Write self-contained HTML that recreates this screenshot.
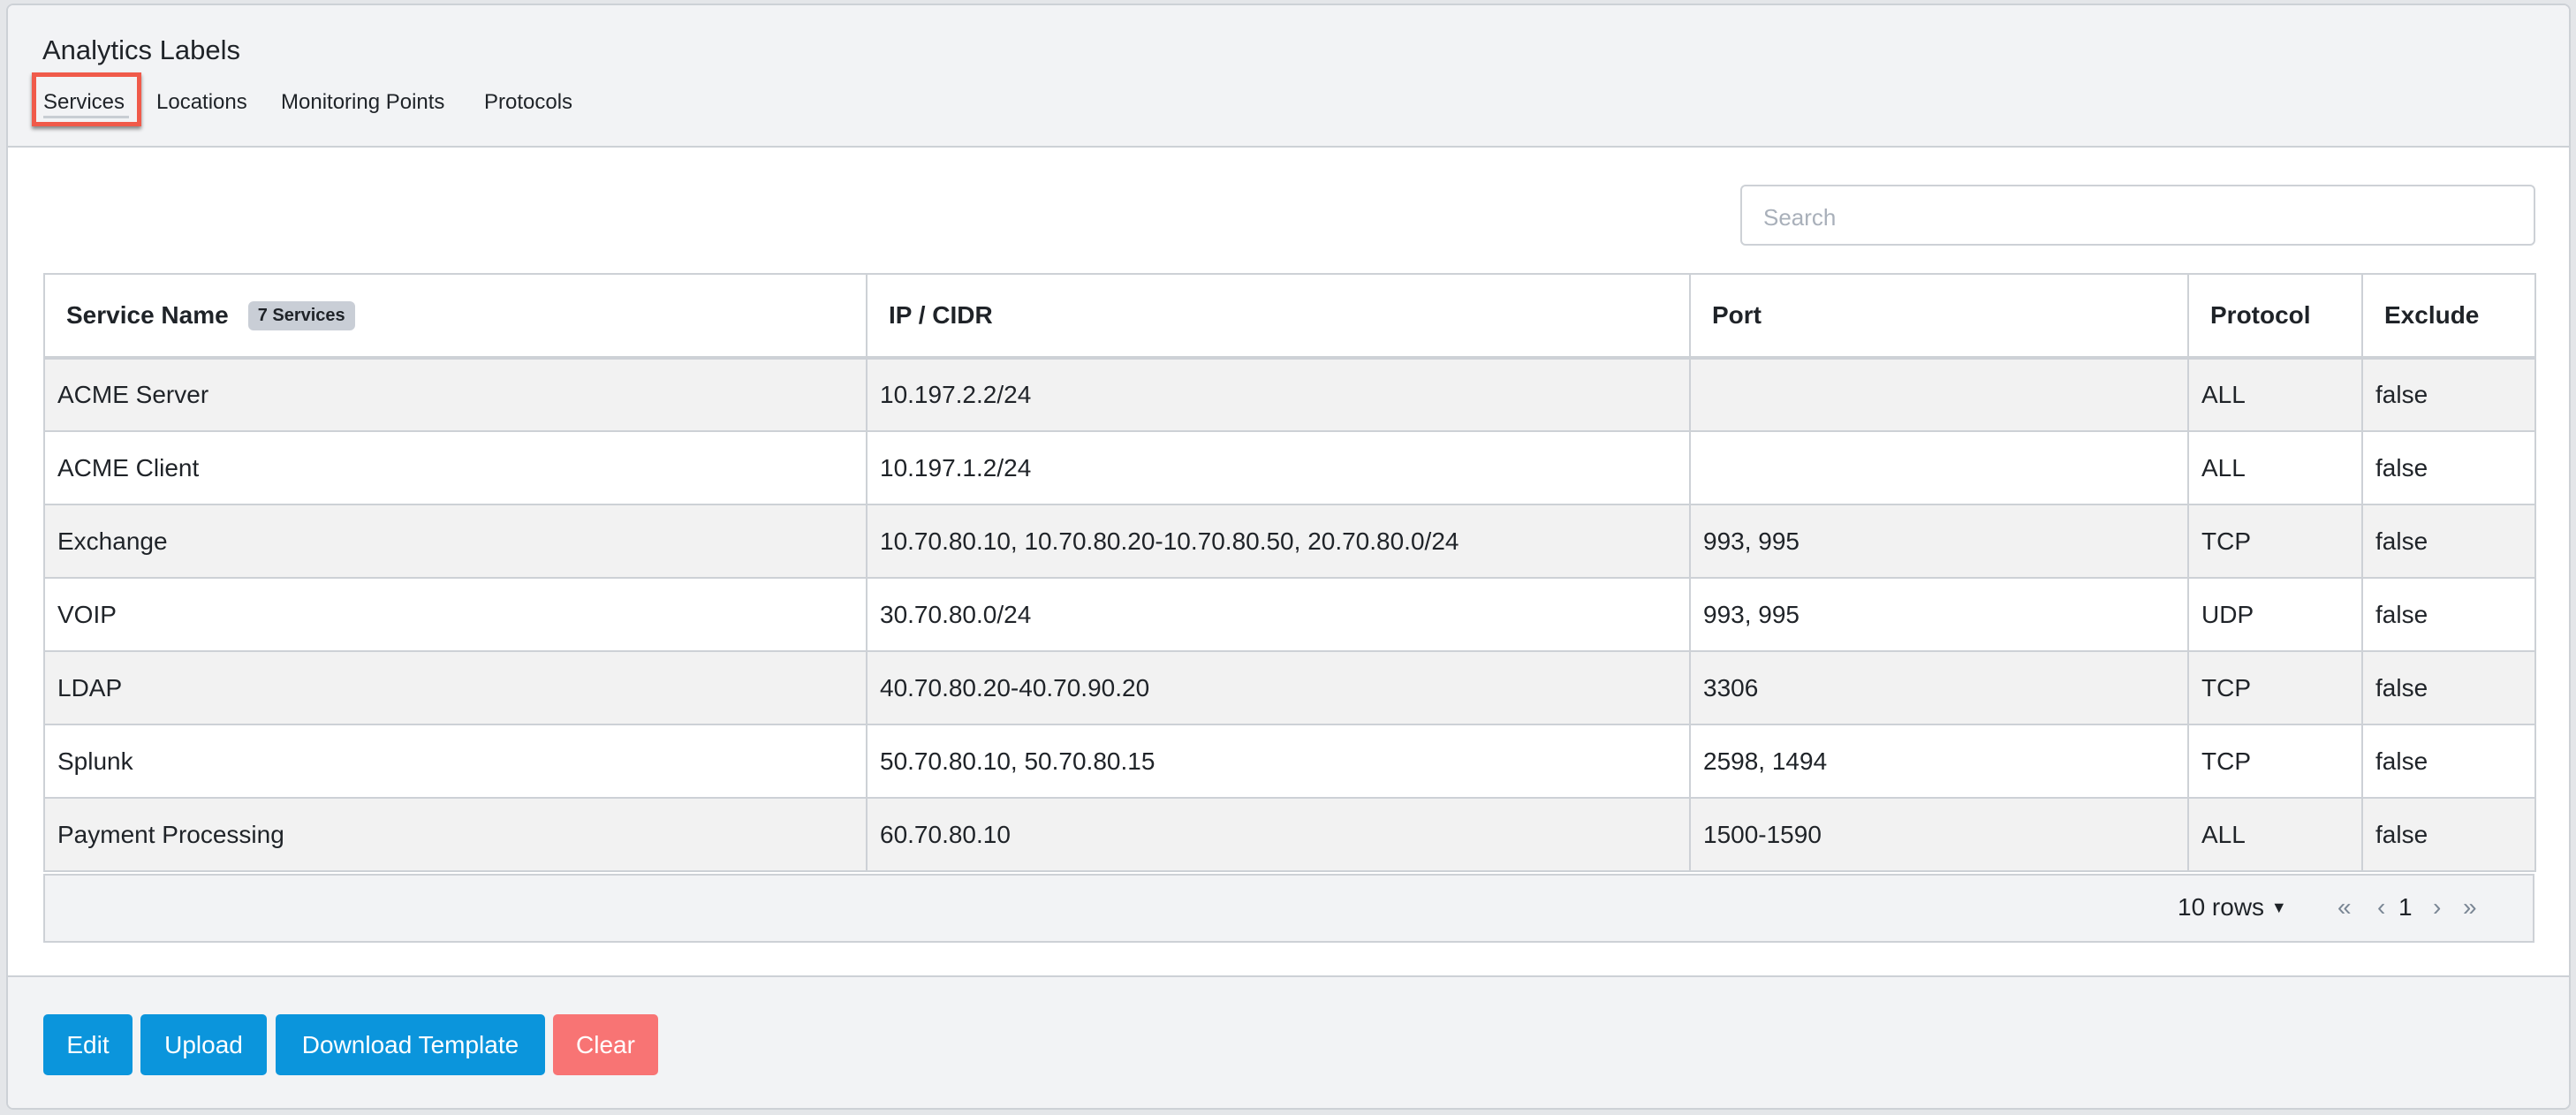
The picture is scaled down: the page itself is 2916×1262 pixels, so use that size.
<!DOCTYPE html>
<html><head><meta charset="utf-8"><style>
*{box-sizing:border-box;margin:0;padding:0}
body{width:2916px;height:1262px;background:#e4e6e9;font-family:"Liberation Sans",Arial,sans-serif;color:#1f2328;position:relative;overflow:hidden}
.card{position:absolute;left:7px;top:4px;width:2903px;height:1252px;background:#fff;border:2px solid #cdd1d6;border-radius:8px;overflow:hidden}
.hdr{position:absolute;left:0;top:0;width:100%;height:161px;background:#f2f3f5;border-bottom:2px solid #cdd1d6}
.title{position:absolute;left:39px;top:33px;font-size:31px}
.tab{position:absolute;top:96px;font-size:24px}
.redbox{position:absolute;left:27px;top:76px;width:124px;height:61px;border:5px solid #f05a4a;box-shadow:0 3px 4px rgba(0,0,0,.45)}
.uline{position:absolute;left:40px;top:125px;width:97px;height:3px;background:#c8cdd3}
.search{position:absolute;left:1961px;top:203px;width:900px;height:69px;border:2px solid #cdd1d6;border-radius:6px;font-size:26px;color:#a9b0ba;padding:20px 24px}
table{position:absolute;left:40px;top:303px;border-collapse:collapse;table-layout:fixed;font-size:28px}
td,th{border:2px solid #cdd1d6;text-align:left;padding:0 14px;height:83px;white-space:nowrap}
th{height:95px;font-weight:bold;border-bottom:4px solid #cdd1d6;padding-left:24px}
tr.s td{background:#f2f2f2}
.badge{display:inline-block;background:#c9ced6;font-size:20px;padding:5px 11px;border-radius:6px;margin-left:22px;vertical-align:3px}
.foot{position:absolute;left:40px;top:983px;width:2820px;height:78px;background:#f2f3f5;border:2px solid #cdd1d6;font-size:28px}
.bot{position:absolute;left:0;top:1098px;width:100%;height:160px;background:#f2f3f5;border-top:2px solid #cdd1d6}
.btn{position:absolute;top:1142px;height:69px;background:#0b95dc;color:#fff;font-size:28px;border-radius:5px;text-align:center;line-height:69px}
.pg{position:absolute;top:20px;color:#7a8694}
</style></head><body>
<div class="card">
<div class="hdr">
<div class="title">Analytics Labels</div>
<div class="redbox"></div>
<div class="uline"></div>
<div class="tab" style="left:40px">Services</div>
<div class="tab" style="left:168px">Locations</div>
<div class="tab" style="left:309px">Monitoring Points</div>
<div class="tab" style="left:539px">Protocols</div>
</div>
<div class="search">Search</div>
<table>
<colgroup><col style="width:931px"><col style="width:932px"><col style="width:564px"><col style="width:197px"><col style="width:196px"></colgroup>
<tr><th>Service Name<span class="badge">7 Services</span></th><th>IP / CIDR</th><th>Port</th><th>Protocol</th><th>Exclude</th></tr>
<tr class="s"><td>ACME Server</td><td>10.197.2.2/24</td><td></td><td>ALL</td><td>false</td></tr>
<tr><td>ACME Client</td><td>10.197.1.2/24</td><td></td><td>ALL</td><td>false</td></tr>
<tr class="s"><td>Exchange</td><td>10.70.80.10, 10.70.80.20-10.70.80.50, 20.70.80.0/24</td><td>993, 995</td><td>TCP</td><td>false</td></tr>
<tr><td>VOIP</td><td>30.70.80.0/24</td><td>993, 995</td><td>UDP</td><td>false</td></tr>
<tr class="s"><td>LDAP</td><td>40.70.80.20-40.70.90.20</td><td>3306</td><td>TCP</td><td>false</td></tr>
<tr><td>Splunk</td><td>50.70.80.10, 50.70.80.15</td><td>2598, 1494</td><td>TCP</td><td>false</td></tr>
<tr class="s"><td>Payment Processing</td><td>60.70.80.10</td><td>1500-1590</td><td>ALL</td><td>false</td></tr>
</table>
<div class="foot">
<div style="position:absolute;left:2414px;top:20px">10 rows <span style="font-size:18px;vertical-align:3px">▼</span></div>
<div class="pg" style="left:2595px">«</div>
<div class="pg" style="left:2640px">‹</div>
<div class="pg" style="left:2664px;color:#1f2328">1</div>
<div class="pg" style="left:2703px">›</div>
<div class="pg" style="left:2737px">»</div>
</div>
<div class="bot"></div>
<div class="btn" style="left:40px;width:101px">Edit</div>
<div class="btn" style="left:150px;width:143px">Upload</div>
<div class="btn" style="left:303px;width:305px">Download Template</div>
<div class="btn" style="left:617px;width:119px;background:#f87474">Clear</div>
</div>
</body></html>
